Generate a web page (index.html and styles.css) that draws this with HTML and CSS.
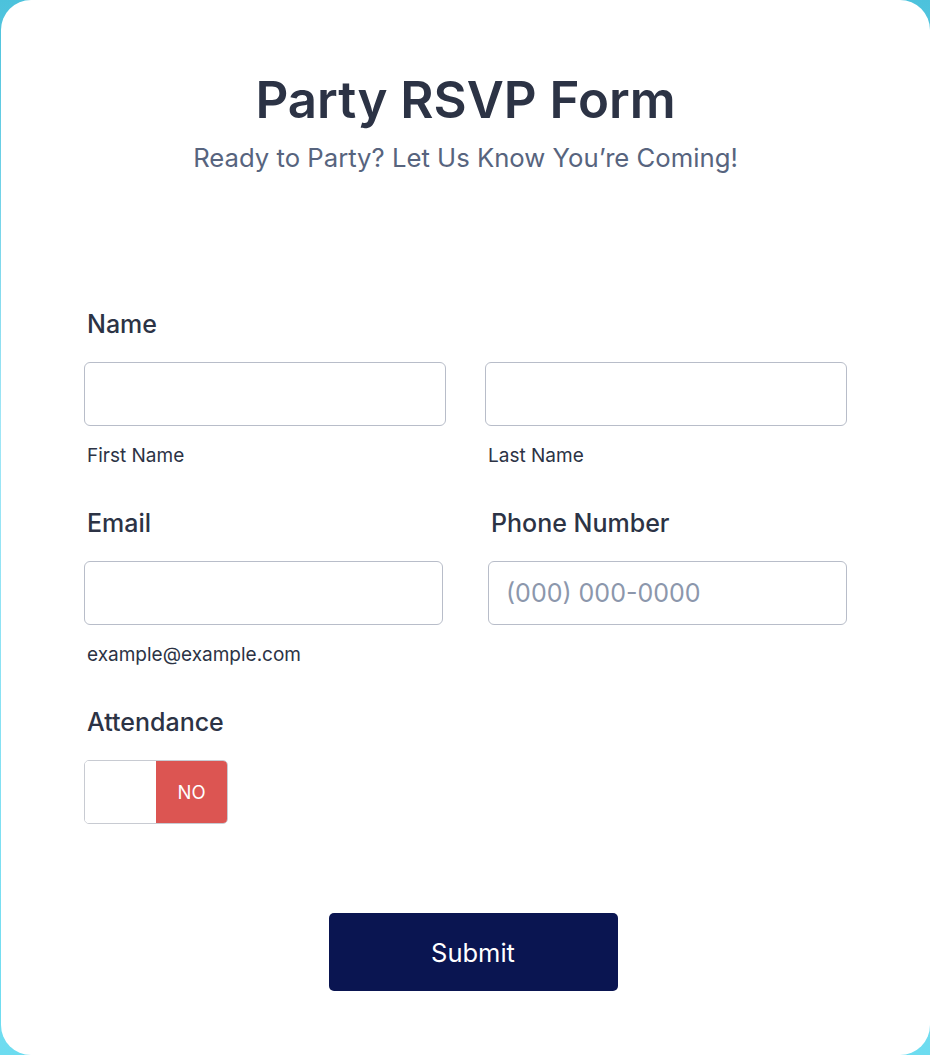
FILE: index.html
```html
<!DOCTYPE html>
<html lang="en">
<head>
<meta charset="utf-8">
<title>Party RSVP Form</title>
<link rel="stylesheet" href="styles.css">
</head>
<body>
<main class="card">
  <header class="header">
    <h1 class="title">Party RSVP Form</h1>
    <p class="subtitle">Ready to Party? Let Us Know You’re Coming!</p>
  </header>

  <form class="form">
    <section class="field field-name">
      <label class="label">Name</label>
      <div class="row row-name">
        <div class="col">
          <input class="input" type="text">
          <span class="sublabel">First Name</span>
        </div>
        <div class="col">
          <input class="input" type="text">
          <span class="sublabel">Last Name</span>
        </div>
      </div>
    </section>

    <div class="row row-contact">
      <section class="field col">
        <label class="label">Email</label>
        <input class="input" type="email">
        <span class="sublabel">example@example.com</span>
      </section>
      <section class="field col col-phone">
        <label class="label">Phone Number</label>
        <input class="input" type="tel" placeholder="(000) 000-0000">
      </section>
    </div>

    <section class="field field-attend">
      <label class="label">Attendance</label>
      <div class="toggle">
        <span class="toggle-off"></span>
        <span class="toggle-no">NO</span>
      </div>
    </section>

    <div class="actions">
      <button class="submit" type="button">Submit</button>
    </div>
  </form>
</main>
</body>
</html>
```

FILE: styles.css
```css
* { box-sizing: border-box; }

html, body {
  margin: 0;
  height: 100%;
}

body {
  background: linear-gradient(180deg, #4cc2dc 0%, #9fe6f6 40%, #6ddcf0 100%);
  font-family: Inter, "Noto Sans", sans-serif;
  color: #2c3345;
  overflow: hidden;
}

.card {
  margin-left: 1px;
  width: 929px;
  height: 1055px;
  background: #ffffff;
  border-radius: 30px;
  padding: 70px 83px 0 83px;
}

.header {
  text-align: center;
}

.title {
  margin: 0;
  font-size: 51px;
  font-weight: 600;
  line-height: 60px;
  color: #2c3345;
  letter-spacing: 0;
}

.subtitle {
  margin: 13px 0 0;
  font-size: 25.7px;
  line-height: 30px;
  color: #57647e;
}

.form {
  margin-top: 137px;
}

.label {
  display: block;
  font-size: 25px;
  font-weight: 500;
  line-height: 28px;
  padding-left: 3px;
  color: #2c3345;
}

.row {
  display: grid;
}

.row-name {
  grid-template-columns: 362px 362px;
  column-gap: 39px;
  margin-top: 24px;
}

.col {
  display: flex;
  flex-direction: column;
}

.input {
  display: block;
  width: 100%;
  height: 64px;
  border: 1px solid #b8bdc9;
  border-radius: 6px;
  background: #fff;
  font-family: inherit;
  font-size: 25px;
  padding: 0 17px;
  color: #2c3345;
}

.input::placeholder {
  color: #8c97ac;
}

.sublabel {
  display: block;
  margin-top: 19px;
  padding-left: 3px;
  font-size: 19px;
  line-height: 22px;
  color: #2c3345;
}

.row-contact {
  grid-template-columns: 359px 359px;
  column-gap: 45px;
  margin-top: 42px;
}

.row-contact .input {
  margin-top: 24px;
}

.field-attend {
  margin-top: 42px;
}

.toggle {
  margin-top: 24px;
  display: flex;
  width: 144px;
  height: 64px;
  border: 1px solid #c8cbd2;
  border-radius: 5px;
  overflow: hidden;
}

.toggle-off {
  flex: 1;
  background: #fff;
}

.toggle-no {
  flex: 1;
  background: #dc5552;
  color: #fff;
  font-size: 18.5px;
  display: flex;
  align-items: center;
  justify-content: center;
}

.actions {
  display: flex;
  justify-content: center;
  margin-top: 89px;
  padding-left: 15px;
}

.submit {
  width: 289px;
  height: 78px;
  border: 0;
  border-radius: 5px;
  background: #0a1551;
  color: #fff;
  font-family: inherit;
  font-size: 25.5px;
}
```
